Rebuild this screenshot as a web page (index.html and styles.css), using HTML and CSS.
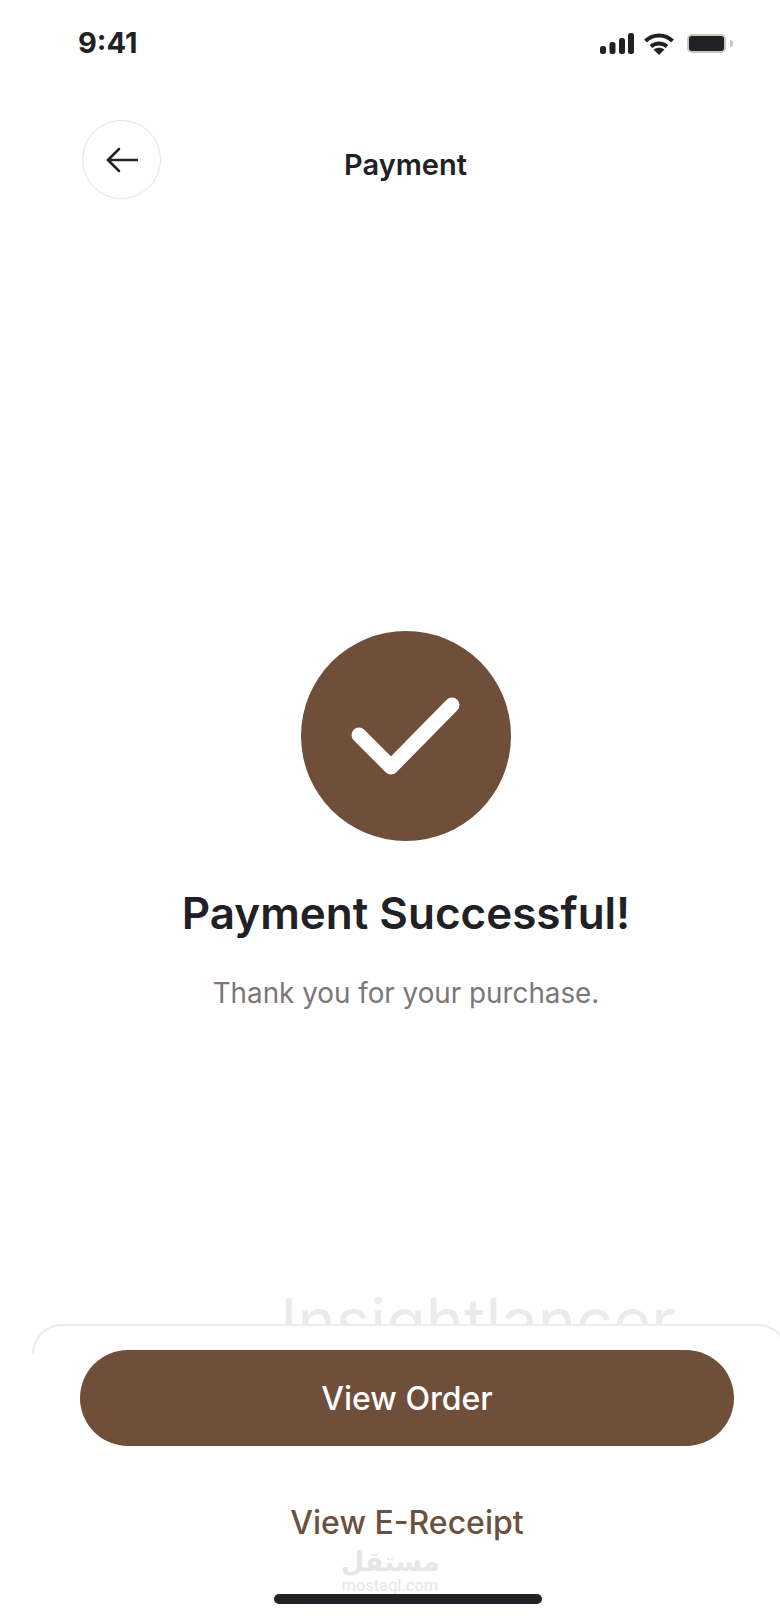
FILE: index.html
```html
<!DOCTYPE html>
<html lang="en">
	<head>
		<meta charset="UTF-8" />
		<meta name="viewport" content="width=device-width, initial-scale=1.0" />
		<title>Payment</title>
		<link rel="stylesheet" href="styles.css">
	</head>
	<body>
		<div class="status-bar">
			<span class="time">9:41</span>
			<div class="status-icons">
				<svg class="signal" width="34" height="21" viewBox="0 0 34 21" fill="#222226">
					<rect x="0" y="13" width="6" height="8" rx="2.5" />
					<rect x="9.5" y="9" width="6" height="12" rx="2.5" />
					<rect x="19" y="5" width="6" height="16" rx="2.5" />
					<rect x="28" y="0" width="6" height="21" rx="2.5" />
				</svg>
				<svg class="wifi" width="30" height="22" viewBox="0 0 30 22" fill="none" stroke="#222226" stroke-width="4">
					<path d="M1.5 8 C9 0.5 21 0.5 28.5 8" />
					<path d="M7 13.5 C11.5 9.5 18.5 9.5 23 13.5" />
					<path d="M15 22 L9.5 16.5 C13 14 17 14 20.5 16.5 Z" fill="#222226" stroke="none" />
				</svg>
				<div class="battery">
					<div class="battery-body"></div>
					<div class="battery-cap"></div>
				</div>
			</div>
		</div>
		<header>
			<button class="back-btn" aria-label="Back">
				<svg width="32" height="26" viewBox="0 0 32 26" fill="none" stroke="#222226" stroke-width="2.6" stroke-linecap="round" stroke-linejoin="round">
					<path d="M31 13 H2" />
					<path d="M13 2 L2 13 L13 24" />
				</svg>
			</button>
			<h2 class="page-title">Payment</h2>
		</header>
		<main>
			<div class="check-circle">
				<svg width="210" height="210" viewBox="0 0 210 210" fill="none" stroke="#fff" stroke-width="15" stroke-linecap="round" stroke-linejoin="round">
					<path d="M58 104 L90 136 L151 74" />
				</svg>
			</div>
			<h1>Payment Successful!</h1>
			<p class="thanks">Thank you for your purchase.</p>
		</main>
		<footer>
			<div class="ghost-text">Insightlancer</div>
			<div class="sheet">
				<a class="btn" href="#">View Order</a>
				<a class="receipt-link" href="#">View E-Receipt</a>
				<div class="home-bar"></div>
			</div>
			<div class="watermark">
				<span class="watermark-ar" lang="ar" dir="rtl">مستقل</span>
				<span class="watermark-en">mostaql.com</span>
			</div>
		</footer>
	</body>
</html>
```

FILE: styles.css
```css
body {
	font-family: "Inter", "Liberation Sans", sans-serif;
	background: #fff;
	color: #212125;
	margin: 0;
	width: 780px;
	height: 1624px;
	overflow: hidden;
	display: flex;
	flex-direction: column;
}
.status-bar {
	height: 120px;
	box-sizing: border-box;
	padding: 28px 47px 0 78px;
	display: flex;
	justify-content: space-between;
	align-items: flex-start;
}
.time {
	font-size: 29px;
	font-weight: 700;
	line-height: 30px;
}
.status-icons {
	display: flex;
	align-items: flex-start;
	padding-top: 5px;
}
.signal {
	margin-right: 10px;
}
.wifi {
	margin-right: 13px;
}
.battery {
	display: flex;
	align-items: center;
	gap: 4px;
	height: 20px;
}
.battery-body {
	width: 35px;
	height: 15px;
	background: #222226;
	border: 2px solid #cbc7c4;
	border-radius: 5px;
}
.battery-cap {
	width: 3px;
	height: 7px;
	background: #c9c6c4;
	border-radius: 0 3px 3px 0;
}
header {
	display: grid;
	grid-template-columns: 1fr auto 1fr;
	padding: 0 51px 0 82px;
}
.back-btn {
	width: 79px;
	height: 79px;
	padding: 0;
	background: #fff;
	border: 1.5px solid #e5e3e3;
	border-radius: 50%;
	display: flex;
	align-items: center;
	justify-content: center;
}
.page-title {
	margin: 0;
	padding-top: 25px;
	font-size: 29px;
	line-height: 40px;
	font-weight: 600;
}
main {
	flex: 1;
	padding: 432px 48px 0 80px;
	display: flex;
	flex-direction: column;
	align-items: center;
}
.check-circle {
	width: 210px;
	height: 210px;
	background: #6f4f39;
	border-radius: 50%;
}
h1 {
	margin: 40px 0 0 0;
	font-size: 44px;
	line-height: 64px;
	font-weight: 600;
}
.thanks {
	margin: 30px 0 0 0;
	font-size: 27.8px;
	line-height: 36px;
	color: #7d7676;
}
footer {
	position: relative;
	height: 300px;
}
.ghost-text {
	position: absolute;
	left: 280px;
	top: -42px;
	font-size: 65px;
	line-height: 80px;
	color: #ebebeb;
}
.sheet {
	position: relative;
	margin: 0 -8px 0 32px;
	padding: 26px 54px 20px 48px;
	height: 300px;
	box-sizing: border-box;
	background: #fff;
	border-radius: 30px 30px 0 0;
	display: flex;
	flex-direction: column;
}
.sheet::before {
	content: "";
	position: absolute;
	left: 0;
	right: 0;
	top: 0;
	height: 28px;
	border: 2px solid #ececec;
	border-bottom: none;
	border-radius: 30px 30px 0 0;
}
.btn {
	position: relative;
	height: 96px;
	background: #6f4f39;
	color: #fff;
	border-radius: 48px;
	font-size: 32px;
	line-height: 98px;
	font-weight: 500;
	text-align: center;
	text-decoration: none;
}
.receipt-link {
	margin-top: 56px;
	color: #6c5040;
	font-size: 32px;
	line-height: 42px;
	font-weight: 500;
	text-align: center;
	text-decoration: none;
}
.home-bar {
	width: 268px;
	height: 10px;
	margin: auto 0 0 194px;
	background: #222226;
	border-radius: 5px;
}
.watermark {
	position: absolute;
	left: 343px;
	top: 222px;
	width: 94px;
	display: flex;
	flex-direction: column;
	align-items: center;
	color: #e6e6e6;
}
.watermark-ar {
	font-family: "DejaVu Sans", sans-serif;
	font-size: 27px;
	font-weight: 700;
	line-height: 31px;
}
.watermark-en {
	font-family: "Roboto", sans-serif;
	font-size: 16px;
	line-height: 17px;
	letter-spacing: 0.2px;
}
```
